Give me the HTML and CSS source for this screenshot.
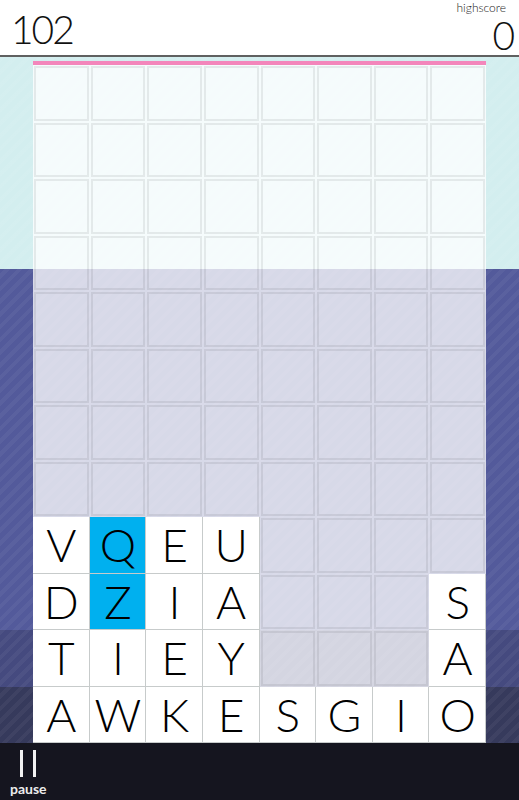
FILE: index.html
```html
<!DOCTYPE html>
<html>
<head>
<meta charset="utf-8">
<link rel="stylesheet" href="styles.css">
</head>
<body>
<div class="app">
  <header class="topbar">
    <div class="score">102</div>
    <div class="high">
      <div class="high-label">highscore</div>
      <div class="high-value">0</div>
    </div>
  </header>
  <main class="board">
    <div class="timer"></div>
    <div class="grid">
      <div class="cell"></div><div class="cell"></div><div class="cell"></div><div class="cell"></div><div class="cell"></div><div class="cell"></div><div class="cell"></div><div class="cell"></div>
      <div class="cell"></div><div class="cell"></div><div class="cell"></div><div class="cell"></div><div class="cell"></div><div class="cell"></div><div class="cell"></div><div class="cell"></div>
      <div class="cell"></div><div class="cell"></div><div class="cell"></div><div class="cell"></div><div class="cell"></div><div class="cell"></div><div class="cell"></div><div class="cell"></div>
      <div class="cell"></div><div class="cell"></div><div class="cell"></div><div class="cell"></div><div class="cell"></div><div class="cell"></div><div class="cell"></div><div class="cell"></div>
      <div class="cell"></div><div class="cell"></div><div class="cell"></div><div class="cell"></div><div class="cell"></div><div class="cell"></div><div class="cell"></div><div class="cell"></div>
      <div class="cell"></div><div class="cell"></div><div class="cell"></div><div class="cell"></div><div class="cell"></div><div class="cell"></div><div class="cell"></div><div class="cell"></div>
      <div class="cell"></div><div class="cell"></div><div class="cell"></div><div class="cell"></div><div class="cell"></div><div class="cell"></div><div class="cell"></div><div class="cell"></div>
      <div class="cell"></div><div class="cell"></div><div class="cell"></div><div class="cell"></div><div class="cell"></div><div class="cell"></div><div class="cell"></div><div class="cell"></div>

      <div class="tile">V</div><div class="tile sel">Q</div><div class="tile">E</div><div class="tile">U</div><div class="cell"></div><div class="cell"></div><div class="cell"></div><div class="cell"></div>
      <div class="tile">D</div><div class="tile sel">Z</div><div class="tile">I</div><div class="tile">A</div><div class="cell"></div><div class="cell"></div><div class="cell"></div><div class="tile">S</div>
      <div class="tile">T</div><div class="tile">I</div><div class="tile">E</div><div class="tile">Y</div><div class="cell"></div><div class="cell"></div><div class="cell"></div><div class="tile">A</div>
      <div class="tile">A</div><div class="tile">W</div><div class="tile">K</div><div class="tile">E</div><div class="tile">S</div><div class="tile">G</div><div class="tile">I</div><div class="tile">O</div>
    </div>
  </main>
  <footer class="bottombar">
    <div class="pause">
      <div class="pause-icon"><span class="bar"></span><span class="bar"></span></div>
      <div class="pause-label">pause</div>
    </div>
  </footer>
</div>
</body>
</html>
```

FILE: styles.css
```css
* { box-sizing: border-box; }
html, body { margin: 0; padding: 0; }
body {
  width: 519px;
  height: 800px;
  overflow: hidden;
  font-family: Lato, "Open Sans", sans-serif;
  background: #15151f;
}
.app {
  display: flex;
  flex-direction: column;
  height: 800px;
}
.topbar {
  height: 57px;
  flex: none;
  background: #ffffff;
  border-bottom: 2px solid #5f6060;
  display: flex;
  justify-content: space-between;
  align-items: flex-start;
  color: #111;
}
.score {
  font-family: "Lato Light", Lato, sans-serif;
  font-size: 39px;
  line-height: 39px;
  letter-spacing: -2px;
  padding-top: 10px;
  padding-left: 11px;
}
.high {
  display: flex;
  flex-direction: column;
  align-items: flex-end;
  padding-top: 2px;
  padding-right: 4px;
}
.high-label {
  font-family: "Lato Light", Lato, sans-serif;
  font-size: 12px;
  line-height: 12px;
  color: #222;
  margin-right: 9px;
}
.high-value {
  font-family: "Lato Light", Lato, sans-serif;
  font-size: 39px;
  line-height: 39px;
  margin-top: 2px;
}
.board {
  height: 686px;
  flex: none;
  padding: 4px 33px 0 33px;
  display: flex;
  flex-direction: column;
  background:
    repeating-linear-gradient(135deg, rgba(255,255,255,0.045) 0 4px, rgba(255,255,255,0) 4px 9px),
    linear-gradient(to bottom, #d3eeef 0 212px, #535a9b 212px 573px, #454a7f 573px 630px, #363a5c 630px 686px);
}
.timer {
  height: 4px;
  flex: none;
  background: #f386bb;
}
.grid {
  height: 678px;
  flex: none;
  display: grid;
  grid-template-columns: repeat(8, 1fr);
  grid-template-rows: repeat(12, 1fr);
  background: rgba(255,255,255,0.77);
}
.cell {
  margin: 1px;
  border: 2px solid rgba(0,0,0,0.07);
}
.tile {
  background: #ffffff;
  box-shadow: inset -1px -1px 0 #c7cbcb;
  display: flex;
  align-items: center;
  justify-content: center;
  font-family: "Lato Light", Lato, sans-serif;
  font-size: 46px;
  color: #000;
  line-height: 1;
}
.tile.sel {
  background: #00b0ef;
}
.bottombar {
  height: 57px;
  flex: none;
  background: #15151f;
  display: flex;
}
.pause {
  display: flex;
  flex-direction: column;
  align-items: center;
  padding-left: 10px;
  padding-top: 7px;
}
.pause-icon {
  display: flex;
  gap: 10px;
  height: 27px;
}
.bar {
  width: 3px;
  height: 27px;
  background: #f2f2f2;
}
.pause-label {
  margin-top: 5px;
  font-size: 14px;
  line-height: 14px;
  font-weight: 700;
  color: #ececec;
}
```
